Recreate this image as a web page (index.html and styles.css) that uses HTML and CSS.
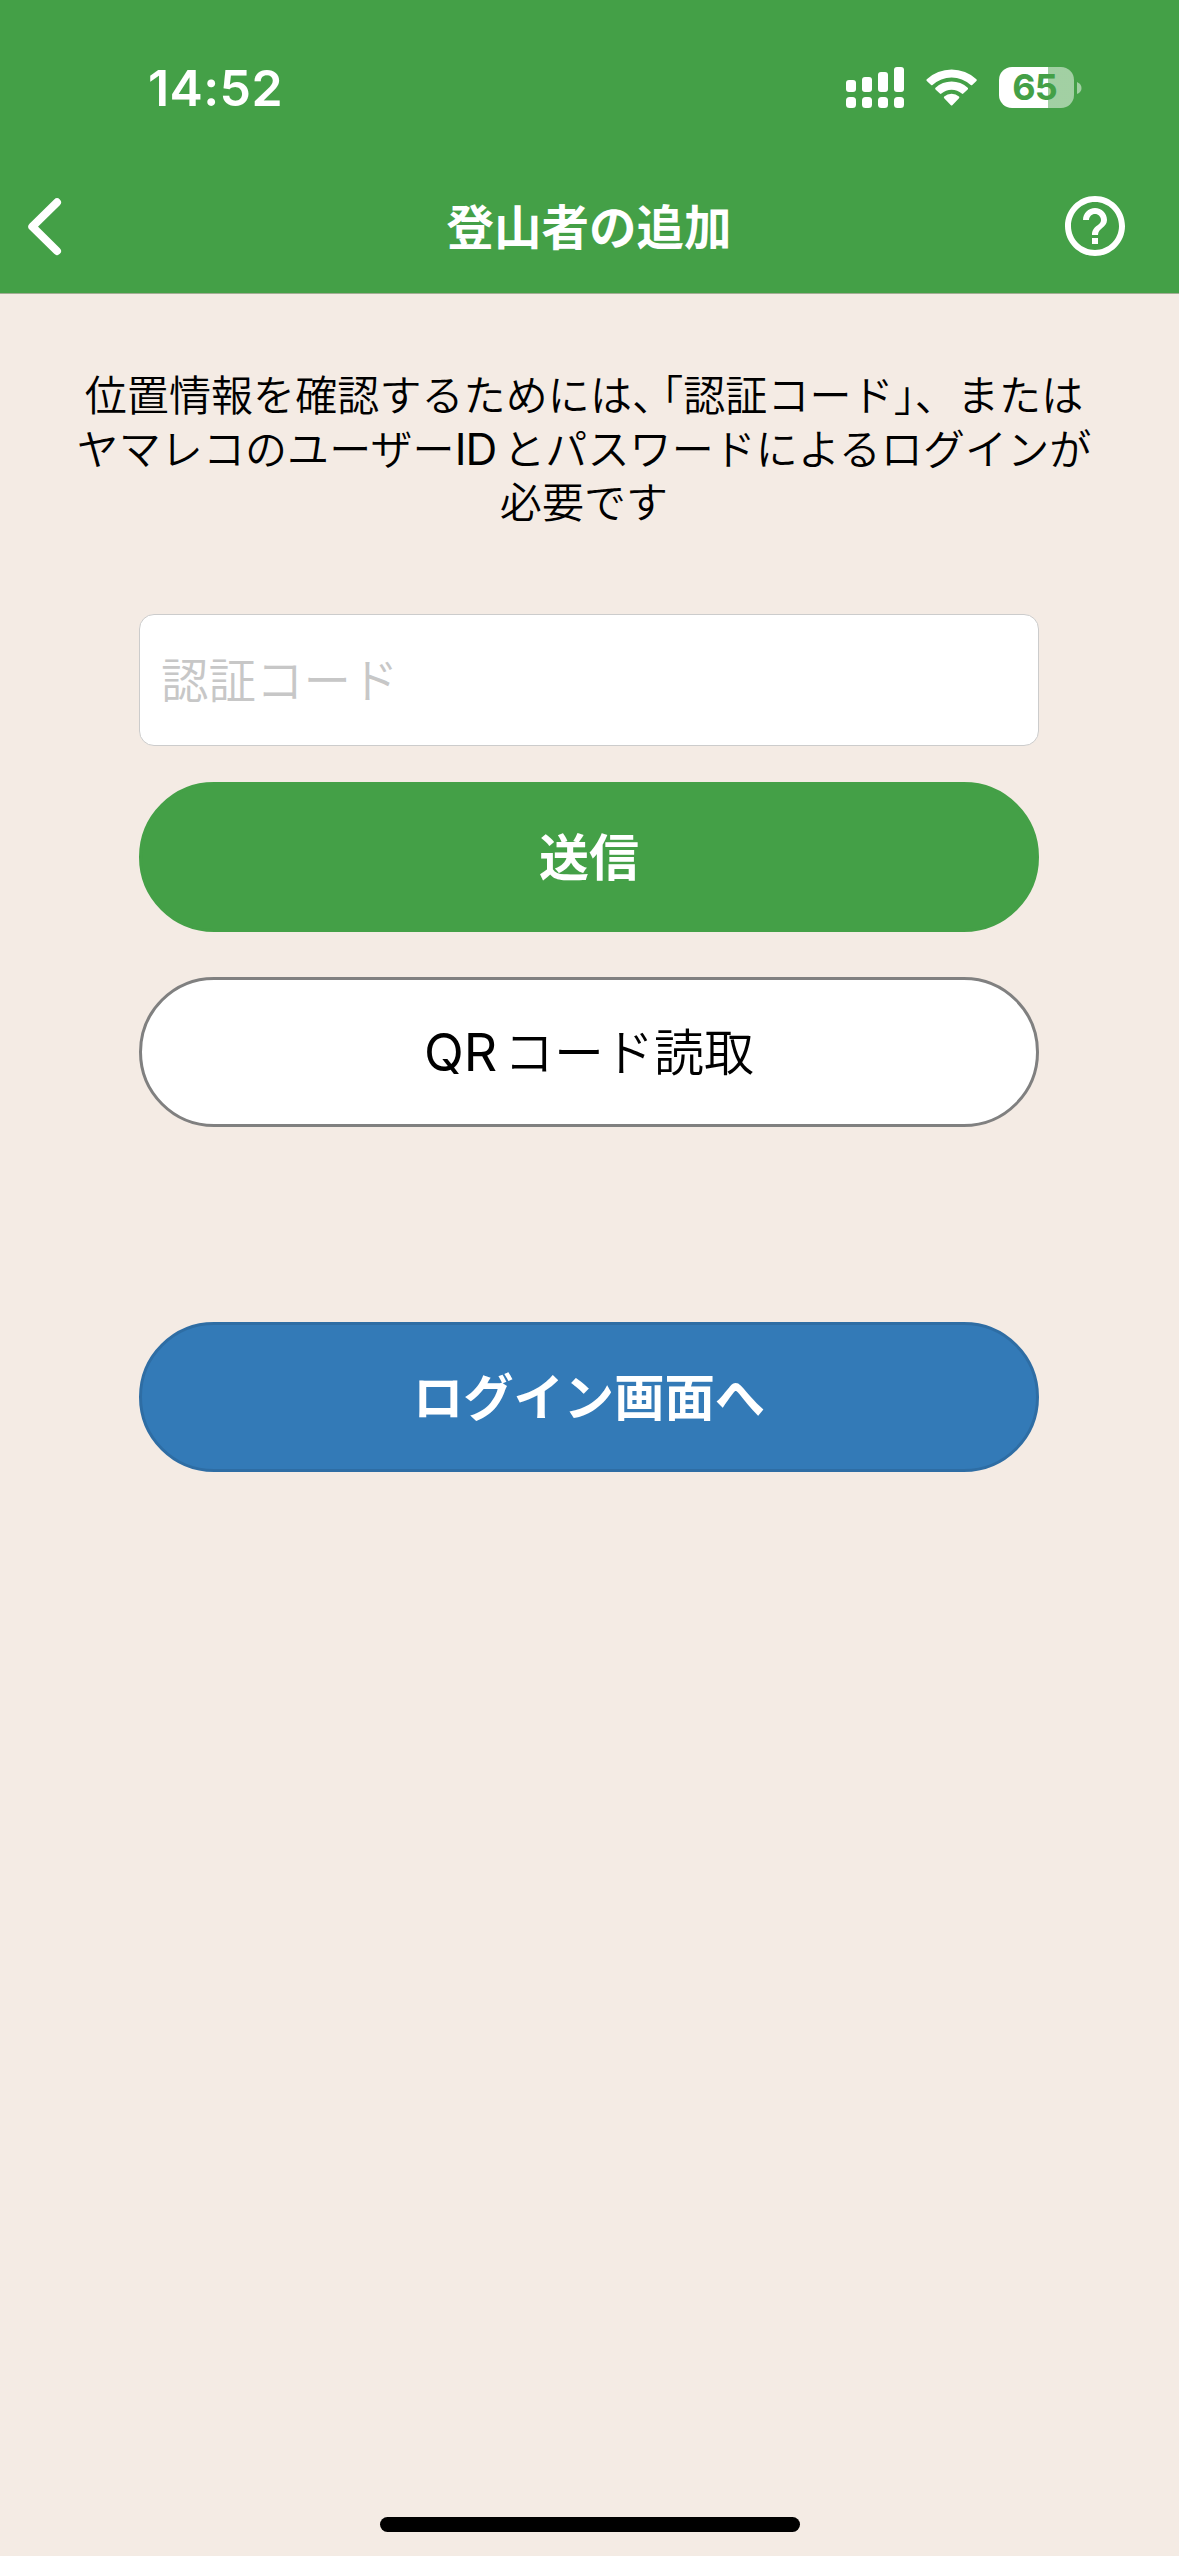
FILE: index.html
```html
<!DOCTYPE html>
<html lang="ja">
<head>
<meta charset="utf-8">
<title>登山者の追加</title>
<link rel="stylesheet" href="styles.css">
</head>
<body>
<div class="screen">
  <header class="header">
    <div class="status">
      <span class="time">14:52</span>
      <div class="indicators">
        <svg class="signal" width="58" height="42" viewBox="0 0 58 42" fill="#fff">
          <rect x="0" y="13" width="10" height="12" rx="3"/>
          <rect x="16" y="10" width="10" height="15" rx="3"/>
          <rect x="32" y="5" width="10" height="20" rx="3"/>
          <rect x="48" y="0" width="10" height="25" rx="3"/>
          <rect x="0" y="30" width="10" height="11" rx="3.5"/>
          <rect x="16" y="30" width="10" height="11" rx="3.5"/>
          <rect x="32" y="30" width="10" height="11" rx="3.5"/>
          <rect x="48" y="30" width="10" height="11" rx="3.5"/>
        </svg>
        <svg class="wifi" width="52" height="42" viewBox="0 0 52 42" fill="#fff">
          <path d="M.8 12.3Q0 13.1.8 13.9L5.1 17.9Q5.8 18.6 6.5 17.9A28.5 28.5 0 0 1 44.700 17.900Q45.500 18.600 46.200 17.900L50.400 13.900Q51.200 13.100 50.400 12.300A36.500 36.500 0 0 0 .8 12.300Z"/>
          <path d="M9.500 20.800Q8.700 21.600 9.500 22.400L13.900 26.600Q14.700 27.300 15.400 26.600A15.200 15.200 0 0 1 35.800 26.600Q36.500 27.300 37.300 26.600L41.700 22.400Q42.500 21.600 41.700 20.800A23.600 23.600 0 0 0 9.500 20.800Z"/>
          <path d="M18.200 29.600Q17.400 30.400 18.200 31.200L24.900 38.200Q25.600 38.900 26.300 38.200L33 31.200Q33.800 30.400 33 29.600A11 11 0 0 0 18.200 29.600Z"/>
        </svg>
        <div class="battery"><div class="cell">65</div><svg width="5" height="12" viewBox="0 0 5 12"><path d="M0 0Q4.500 2 4.500 6T0 12Z" fill="#fff" fill-opacity=".5"/></svg></div>
      </div>
    </div>
    <nav class="nav">
      <svg class="back" width="48" height="72" viewBox="0 0 48 72" fill="none" stroke="#fff" stroke-width="8" stroke-linecap="round" stroke-linejoin="round"><path d="M37 12.300 12.300 36.700 37 61"/></svg>
      <h1 class="title">登山者の追加</h1>
      <svg class="help" width="72" height="72" viewBox="0 0 24 24" fill="#fff"><path d="M11 18h2v-2h-2v2zm1-16C6.480 2 2 6.480 2 12s4.480 10 10 10 10-4.480 10-10S17.520 2 12 2zm0 18c-4.410 0-8-3.590-8-8s3.590-8 8-8 8 3.590 8 8-3.590 8-8 8zm0-14c-2.210 0-4 1.790-4 4h2c0-1.100.9-2 2-2s2 .9 2 2c0 2-3 1.750-3 5h2c0-2.250 3-2.500 3-5 0-2.210-1.790-4-4-4z"/></svg>
    </nav>
  </header>
  <main class="main">
    <p class="lead">位置情報を確認するためには<span class="half comma">、</span><span class="half">「</span>認証コード<span class="half">」</span>、または<br>ヤマレコのユーザー<span class="latin">ID</span>とパスワードによるログインが<br>必要です</p>
    <input class="code" type="text" placeholder="認証コード">
    <button class="btn send">送信</button>
    <button class="btn qr"><span class="latin">QR</span>コード読取</button>
    <button class="btn login">ログイン画面へ</button>
  </main>
  <div class="home"></div>
</div>
</body>
</html>
```
FILE: styles.css
```css
* { box-sizing: border-box; }
body {
  margin: 0;
  background: #f4ebe4;
  color: #000;
  font-family: Inter, "Noto Sans CJK JP", sans-serif;
  text-autospace: no-autospace;
  text-spacing-trim: space-all;
}
.screen {
  width: 1179px;
  height: 2556px;
  display: flex;
  flex-direction: column;
}
.header {
  height: 294px;
  background: #44a047;
  border-bottom: 1px solid #a3ad94;
  color: #fff;
}
.status {
  height: 175px;
  display: flex;
  justify-content: space-between;
  align-items: center;
  padding: 0 97px 0 148px;
}
.time { font-size: 50px; font-weight: 600; line-height: 60px; letter-spacing: .4px; }
.indicators { display: flex; align-items: center; }
.wifi { margin-left: 22px; }
.battery { display: flex; align-items: center; gap: 3px; margin-left: 21px; }
.cell {
  width: 75px;
  height: 41px;
  border-radius: 13px;
  background: linear-gradient(90deg, #fff 49px, rgba(255, 255, 255, .5) 49px);
  color: #44a047;
  font-size: 36px;
  font-weight: 700;
  line-height: 41px;
  letter-spacing: -1px;
  text-indent: -4px;
  text-align: center;
}
.nav {
  height: 102px;
  display: flex;
  align-items: center;
  justify-content: space-between;
  padding: 0 48px 0 20px;
}
.title {
  margin: 4px 0 0 51px;
  font-size: 47.500px;
  font-weight: 700;
  line-height: 60px;
}
.main {
  flex: 1;
  display: flex;
  flex-direction: column;
  align-items: center;
  padding-right: 1px;
}
.lead {
  margin: 75px 10px 0 0;
  font-size: 42px;
  line-height: 53.500px;
  letter-spacing: .1px;
  font-weight: 350;
  text-align: center;
  white-space: nowrap;
}
.half { font-feature-settings: "halt"; }
.comma { margin-right: 9px; }
.lead .latin { margin-right: 7px; font-size: 44px; font-weight: 400; line-height: 1; letter-spacing: -1px; }
.code {
  width: 900px;
  height: 132px;
  margin: 84.500px 0 0;
  padding: 0 21px;
  border: 1px solid #ccc;
  border-radius: 15px;
  background: #fff;
  font: 350 47.500px Inter, "Noto Sans CJK JP", sans-serif;
}
.code::placeholder { color: #c7c7c7; opacity: 1; }
.btn {
  width: 900px;
  height: 150px;
  padding: 0 0 7px;
  border: 3px solid;
  border-radius: 75px;
  font: 700 50px Inter, "Noto Sans CJK JP", sans-serif;
  color: #fff;
}
.send { margin-top: 36px; background: #44a047; border-color: #44a047; }
.qr { margin-top: 45px; background: #fff; border-color: #808080; color: #000; font-weight: 350; }
.qr .latin { margin-right: 7px; font-size: 52px; font-weight: 400; line-height: 1; }
.login { margin-top: 195px; background: #337ab7; border-color: #2e6da4; font-size: 50.300px; }
.home {
  width: 420px;
  height: 15px;
  margin: 0 auto 24px;
  border-radius: 8px;
  background: #000;
}
```
